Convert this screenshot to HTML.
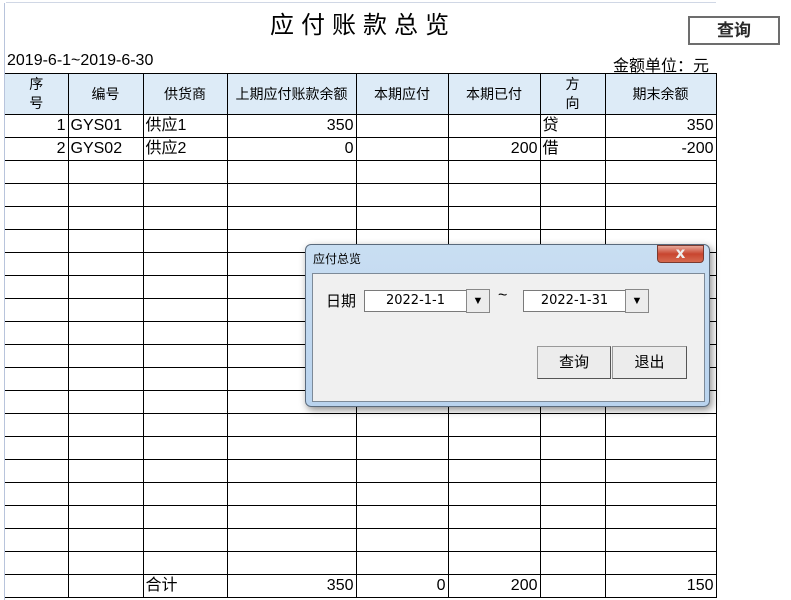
<!DOCTYPE html>
<html><head><meta charset="utf-8"><style>
body{margin:0;width:791px;height:600px;overflow:hidden;background:#fff;position:relative;font-family:"Liberation Sans","Noto Sans CJK SC",sans-serif;color:#000}
.a{position:absolute}
table{position:absolute;left:5px;top:73px;border-collapse:collapse;table-layout:fixed;font-size:16px}
td{border:1px solid #000;height:22px;padding:0 2px;white-space:nowrap;overflow:hidden;line-height:22px}
tr.h td{background:#ddebf7;height:40px;text-align:center;font-size:14px;line-height:19px}
td.r{text-align:right}
td.fl{border-left:none}
</style></head><body>
<div class="a" style="left:4px;top:0;width:1px;height:600px;background:#b8c4dc"></div>
<div class="a" style="left:0;top:0;width:791px;height:73px;background:#fff"></div>
<div class="a" style="left:6px;top:2px;width:710px;height:1px;background:#d0d7e5"></div>
<div class="a" style="left:4px;top:3px;width:1px;height:70px;background:#b8c4dc"></div>
<div class="a" style="left:270px;top:5px;font-size:24px;letter-spacing:7px">应付账款总览</div>
<div class="a" style="left:688px;top:16px;width:92px;height:29px;border:2px solid #6d6d6d;box-sizing:border-box;text-align:center;font-size:17px;font-weight:bold;line-height:25px;color:#2a2a2a">查询</div>
<div class="a" style="left:7px;top:52px;font-size:16px">2019-6-1~2019-6-30</div>
<div class="a" style="left:613px;top:52px;font-size:16px">金额单位：元</div>
<table>
<colgroup><col style="width:63px"><col style="width:75px"><col style="width:84px"><col style="width:129px"><col style="width:92px"><col style="width:92px"><col style="width:65px"><col style="width:111px"></colgroup>
<tr class="h"><td class="fl">序<br>号</td><td>编号</td><td>供货商</td><td>上期应付账款余额</td><td>本期应付</td><td>本期已付</td><td>方<br>向</td><td>期末余额</td></tr>
<tr><td class="r fl">1</td><td>GYS01</td><td>供应1</td><td class="r">350</td><td></td><td></td><td>贷</td><td class="r">350</td></tr>
<tr><td class="r fl">2</td><td>GYS02</td><td>供应2</td><td class="r">0</td><td></td><td class="r">200</td><td>借</td><td class="r">-200</td></tr>
<tr><td class="fl"></td><td></td><td></td><td></td><td></td><td></td><td></td><td></td></tr>
<tr><td class="fl"></td><td></td><td></td><td></td><td></td><td></td><td></td><td></td></tr>
<tr><td class="fl"></td><td></td><td></td><td></td><td></td><td></td><td></td><td></td></tr>
<tr><td class="fl"></td><td></td><td></td><td></td><td></td><td></td><td></td><td></td></tr>
<tr><td class="fl"></td><td></td><td></td><td></td><td></td><td></td><td></td><td></td></tr>
<tr><td class="fl"></td><td></td><td></td><td></td><td></td><td></td><td></td><td></td></tr>
<tr><td class="fl"></td><td></td><td></td><td></td><td></td><td></td><td></td><td></td></tr>
<tr><td class="fl"></td><td></td><td></td><td></td><td></td><td></td><td></td><td></td></tr>
<tr><td class="fl"></td><td></td><td></td><td></td><td></td><td></td><td></td><td></td></tr>
<tr><td class="fl"></td><td></td><td></td><td></td><td></td><td></td><td></td><td></td></tr>
<tr><td class="fl"></td><td></td><td></td><td></td><td></td><td></td><td></td><td></td></tr>
<tr><td class="fl"></td><td></td><td></td><td></td><td></td><td></td><td></td><td></td></tr>
<tr><td class="fl"></td><td></td><td></td><td></td><td></td><td></td><td></td><td></td></tr>
<tr><td class="fl"></td><td></td><td></td><td></td><td></td><td></td><td></td><td></td></tr>
<tr><td class="fl"></td><td></td><td></td><td></td><td></td><td></td><td></td><td></td></tr>
<tr><td class="fl"></td><td></td><td></td><td></td><td></td><td></td><td></td><td></td></tr>
<tr><td class="fl"></td><td></td><td></td><td></td><td></td><td></td><td></td><td></td></tr>
<tr><td class="fl"></td><td></td><td></td><td></td><td></td><td></td><td></td><td></td></tr>
<tr><td class="fl"></td><td></td><td>合计</td><td class="r">350</td><td class="r">0</td><td class="r">200</td><td></td><td class="r">150</td></tr>
</table>
<!-- dialog -->
<div class="a" style="left:305px;top:244px;width:405px;height:163px;border:1px solid #5a6a7c;border-radius:6px;box-sizing:border-box;background:linear-gradient(#c9def2,#b9d3ee);box-shadow:2px 3px 8px rgba(0,0,0,.45)"></div>
<div class="a" style="left:313px;top:250px;font-size:12px">应付总览</div>
<div class="a" style="left:657px;top:245px;width:47px;height:18px;border:1px solid #7a3a30;border-radius:0 0 4px 4px;box-sizing:border-box;background:linear-gradient(#e8a89a,#c8452f 50%,#d66a50);color:#eee;text-align:center;font-size:15px;font-weight:bold;line-height:15px;font-family:'DejaVu Sans',sans-serif">x</div>
<div class="a" style="left:312px;top:273px;width:393px;height:129px;border:1px solid #7d8a98;box-sizing:border-box;background:#f0f0f0"></div>
<div class="a" style="left:326px;top:290px;font-size:15px">日期</div>
<div class="a" style="left:364px;top:290px;width:102px;height:22px;border:1px solid #7a7a7a;border-right:none;box-sizing:border-box;background:#fff;font-family:'DejaVu Sans',sans-serif;font-size:13px;text-align:center;line-height:20px">2022-1-1</div>
<div class="a" style="left:466px;top:289px;width:24px;height:24px;border:1px solid #888;box-sizing:border-box;background:#ececec;font-size:11px;text-align:center;line-height:22px">▼</div>
<div class="a" style="left:498px;top:287px;font-size:16px">~</div>
<div class="a" style="left:523px;top:290px;width:102px;height:22px;border:1px solid #7a7a7a;border-right:none;box-sizing:border-box;background:#fff;font-family:'DejaVu Sans',sans-serif;font-size:13px;text-align:center;line-height:20px">2022-1-31</div>
<div class="a" style="left:625px;top:289px;width:24px;height:24px;border:1px solid #888;box-sizing:border-box;background:#ececec;font-size:11px;text-align:center;line-height:22px">▼</div>
<div class="a" style="left:537px;top:346px;width:74px;height:33px;border:1px solid #999;border-right-color:#555;border-bottom-color:#555;box-sizing:border-box;background:#ececec;font-size:15px;text-align:center;line-height:31px">查询</div>
<div class="a" style="left:612px;top:346px;width:75px;height:33px;border:1px solid #999;border-right-color:#555;border-bottom-color:#555;box-sizing:border-box;background:#ececec;font-size:15px;text-align:center;line-height:31px">退出</div>
</body></html>
